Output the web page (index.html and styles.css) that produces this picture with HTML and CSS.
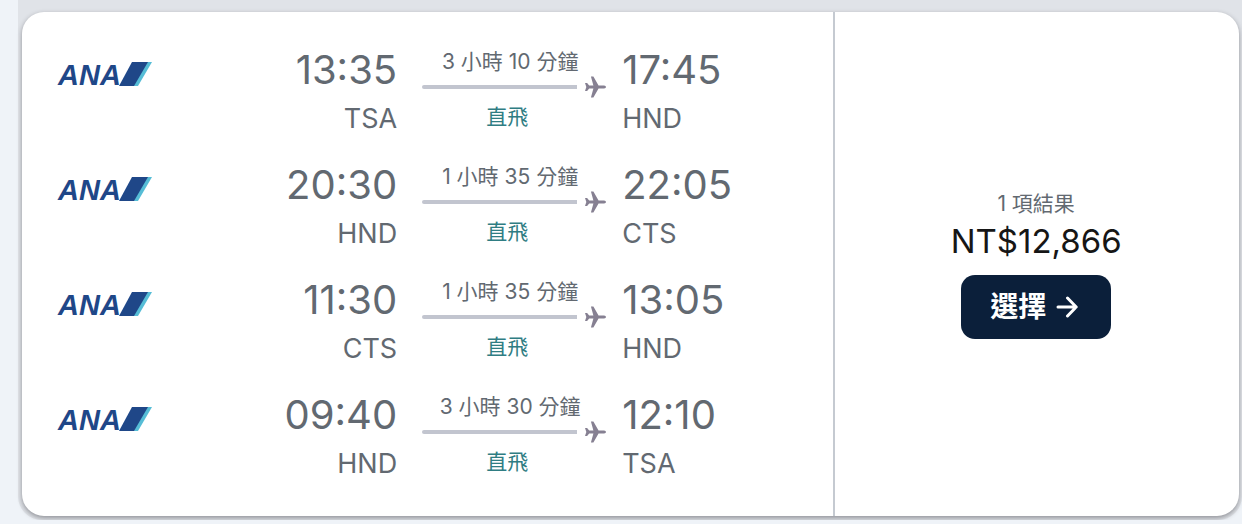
FILE: index.html
```
<!DOCTYPE html>
<html lang="zh-Hant">
<head>
<meta charset="utf-8">
<meta name="viewport" content="width=device-width, initial-scale=1">
<title>ANA</title>
<link rel="stylesheet" href="styles.css">
</head>
<body>
<svg width="0" height="0" class="defs" aria-hidden="true">
  <symbol id="tail" viewBox="0 0 34 26">
    <path d="M14 1H31L18 25H1Z" fill="#1f4788"/>
    <path d="M30 1H34L20 25H16Z" fill="#56bdd6"/>
  </symbol>
  <symbol id="plane" viewBox="0 0 22 22">
    <path d="M6.2 0H8.8L14.2 9.4H20Q22 9.7 22 11Q22 12.3 20 12.6H14.2L8.8 22H6.2L8.8 12.6H4.4L2.2 15.2H0L1.4 11L0 6.8H2.2L4.4 9.4H8.8Z" fill="#868092"/>
  </symbol>
</svg>
<main class="results">
  <article class="card">
    <ul class="legs">
      <li class="leg">
        <div class="logo"><span class="logo-text">ANA</span><svg class="tail" aria-hidden="true"><use href="#tail"/></svg></div>
        <div class="stop depart"><span class="time">13:35</span><span class="code">TSA</span></div>
        <div class="route"><span class="duration">3 小時 10 分鐘</span><span class="track"><span class="line"></span><svg class="plane"><use href="#plane"/></svg></span><span class="direct">直飛</span></div>
        <div class="stop arrive"><span class="time">17:45</span><span class="code">HND</span></div>
      </li>
      <li class="leg">
        <div class="logo"><span class="logo-text">ANA</span><svg class="tail" aria-hidden="true"><use href="#tail"/></svg></div>
        <div class="stop depart"><span class="time">20:30</span><span class="code">HND</span></div>
        <div class="route"><span class="duration">1 小時 35 分鐘</span><span class="track"><span class="line"></span><svg class="plane"><use href="#plane"/></svg></span><span class="direct">直飛</span></div>
        <div class="stop arrive"><span class="time">22:05</span><span class="code">CTS</span></div>
      </li>
      <li class="leg">
        <div class="logo"><span class="logo-text">ANA</span><svg class="tail" aria-hidden="true"><use href="#tail"/></svg></div>
        <div class="stop depart"><span class="time">11:30</span><span class="code">CTS</span></div>
        <div class="route"><span class="duration">1 小時 35 分鐘</span><span class="track"><span class="line"></span><svg class="plane"><use href="#plane"/></svg></span><span class="direct">直飛</span></div>
        <div class="stop arrive"><span class="time">13:05</span><span class="code">HND</span></div>
      </li>
      <li class="leg">
        <div class="logo"><span class="logo-text">ANA</span><svg class="tail" aria-hidden="true"><use href="#tail"/></svg></div>
        <div class="stop depart"><span class="time">09:40</span><span class="code">HND</span></div>
        <div class="route"><span class="duration">3 小時 30 分鐘</span><span class="track"><span class="line"></span><svg class="plane"><use href="#plane"/></svg></span><span class="direct">直飛</span></div>
        <div class="stop arrive"><span class="time">12:10</span><span class="code">TSA</span></div>
      </li>
    </ul>
    <aside class="offer">
      <span class="count">1 項結果</span>
      <span class="price">NT$12,866</span>
      <button class="select" type="button">選擇
        <svg class="arrow" viewBox="0 0 22 22" aria-hidden="true"><path d="M2 11H20M11.5 2L20.2 11L11.5 20"/></svg>
      </button>
    </aside>
  </article>
</main>
</body>
</html>
```
FILE: styles.css
```
* {
  box-sizing: border-box;
}

body {
  margin: 0;
  padding-left: 18px;
  background: #eff3f8;
  color: #626971;
  font-family: Inter, "Noto Sans CJK TC", sans-serif;
}

.defs {
  position: absolute;
}

.results {
  padding: 12px 3px 4px 4px;
  background: #e0e3e8;
  border-radius: 0 0 24px 24px;
}

.card {
  display: grid;
  grid-template-columns: 2fr 1fr;
  background: #fff;
  border-radius: 22px;
  box-shadow: 0 2px 5px rgba(30, 32, 38, 0.42);
}

.legs {
  margin: 0;
  padding: 22px 0 22px 36px;
  list-style: none;
}

.leg {
  display: grid;
  grid-template-columns: 94px 270fr 184px 227fr;
  padding: 8px 0;
}

.logo {
  display: flex;
  align-items: flex-start;
  justify-content: space-between;
  padding-top: 19px;
}

.logo-text {
  width: 60px;
  color: #1f4788;
  font: italic bold 29px/28px "Liberation Sans", sans-serif;
}

.tail {
  flex: none;
  width: 34px;
  height: 26px;
}

.stop,
.route {
  display: flex;
  flex-direction: column;
}

.depart {
  padding-right: 25px;
  align-items: flex-end;
}

.arrive {
  padding-left: 16px;
}

.time {
  font-size: 40px;
  line-height: 55px;
}

.code {
  font-size: 27px;
  line-height: 44px;
}

.duration,
.direct {
  font-size: 21px;
  text-align: center;
  white-space: nowrap;
}

.duration {
  padding: 6px 8px 0 0;
  line-height: 28px;
}

.direct {
  padding-right: 14px;
  color: #2f7d83;
  line-height: 38px;
}

.track {
  display: flex;
  align-items: center;
  gap: 8px;
}

.line {
  flex: 1;
  height: 4px;
  border-radius: 2px 0 0 2px;
  background: #c2c5cf;
}

.plane {
  width: 21px;
  height: 22px;
}

.offer {
  display: flex;
  flex-direction: column;
  align-items: center;
  justify-content: center;
  padding-right: 2px;
  border-left: 2px solid #c5cad1;
}

.count {
  font-size: 21px;
  line-height: 30px;
}

.price {
  color: #161616;
  font-size: 33px;
  line-height: 44px;
}

.select {
  display: flex;
  align-items: center;
  justify-content: center;
  gap: 10px;
  width: 150px;
  height: 64px;
  margin-top: 12px;
  padding: 0 4px 4px 0;
  border: 0;
  border-radius: 14px;
  background: #0b1f3a;
  color: #fff;
  font: bold 28px "Noto Sans CJK TC", sans-serif;
}

.arrow {
  width: 22px;
  height: 22px;
  margin-top: 4px;
  fill: none;
  stroke: #fff;
  stroke-width: 3;
  stroke-linecap: round;
  stroke-linejoin: round;
}
```
